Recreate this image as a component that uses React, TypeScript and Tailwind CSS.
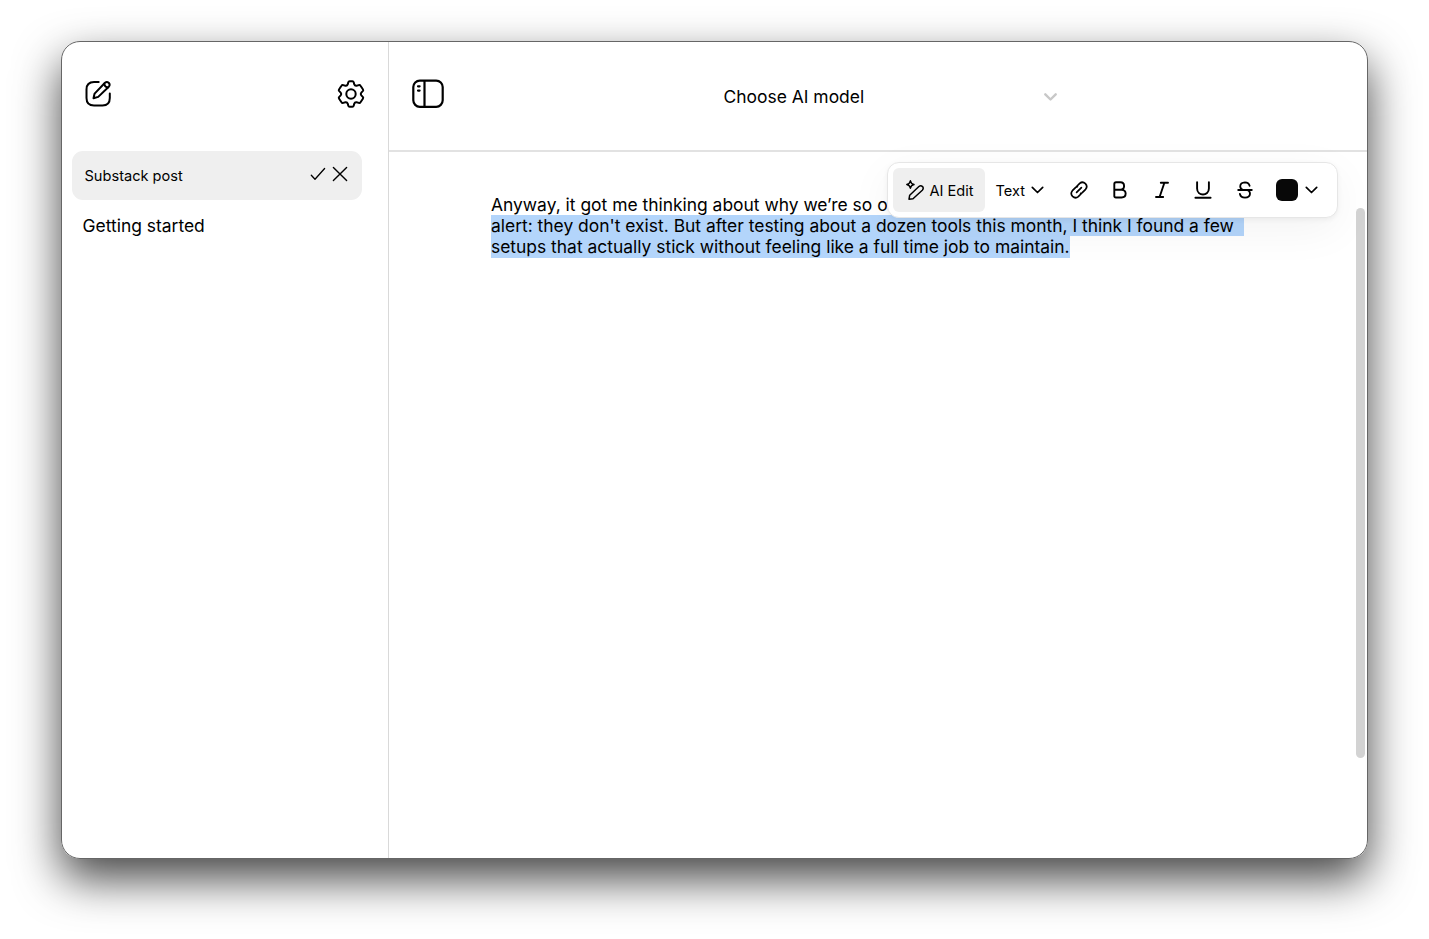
import React from "react";

const stroke = {
  fill: "none",
  stroke: "currentColor",
  strokeLinecap: "round" as const,
  strokeLinejoin: "round" as const,
};

function ComposeIcon() {
  return (
    <svg width="28" height="28" viewBox="0.5 0.5 28 28" {...stroke} strokeWidth="2">
      <path d="M14.2 2.4H9.5Q2 2.4 2 9.9V18.4Q2 25.9 9.5 25.9H18Q25.3 25.9 25.3 18.4V14" />
      <path d="M9 18.8L10.1 14.1L20.5 3.3Q22.3 1.7 24.2 3.3Q26 5.2 24.3 7.2L13.7 17.4Z" />
      <path d="M19.7 4.3Q20.2 7.4 23.4 8" />
    </svg>
  );
}

function GearIcon() {
  return (
    <svg width="28" height="28" viewBox="0 0 28 28" {...stroke} strokeWidth="2">
      <path d="M12.6 1.3H15.4Q16.4 1.3 16.7 2.3L17.3 4.4Q17.9 6 19.5 5.7L21.9 5.1Q23 4.9 23.5 5.8L25.9 9.3Q26.6 10.2 25.8 11.1L24.3 12.6Q23.2 14 24.3 15.4L25.8 16.9Q26.6 17.8 25.9 18.7L23.5 22.2Q23 23.1 21.9 22.9L19.5 22.3Q17.9 22 17.3 23.6L16.7 25.7Q16.4 26.7 15.4 26.7H12.6Q11.6 26.7 11.3 25.7L10.7 23.6Q10.1 22 8.5 22.3L6.1 22.9Q5 23.1 4.5 22.2L2.1 18.7Q1.4 17.8 2.2 16.9L3.7 15.4Q4.8 14 3.7 12.6L2.2 11.1Q1.4 10.2 2.1 9.3L4.5 5.8Q5 4.9 6.1 5.1L8.5 5.7Q10.1 6 10.7 4.4L11.3 2.3Q11.6 1.3 12.6 1.3Z" />
      <circle cx="14" cy="14" r="4.7" />
    </svg>
  );
}

function SidebarIcon() {
  return (
    <svg width="32" height="30" viewBox="0 0 32 30" {...stroke} strokeWidth="2.2">
      <rect x="1.3" y="1.6" width="29.4" height="26.2" rx="6.5" />
      <path d="M12.5 2V28M6 7.3H7.6M6 11.6H7.6" />
    </svg>
  );
}

function Chevron({ weight = 2 }: { weight?: number }) {
  return (
    <svg width="13" height="8" viewBox="0 0 13 8" {...stroke} strokeWidth={weight}>
      <path d="M1.3 1.3L6.5 6.5L11.7 1.3" />
    </svg>
  );
}

function MagicPenIcon() {
  return (
    <svg width="20" height="22" viewBox="0 0 20 22" {...stroke} strokeWidth="1.5">
      <path d="M5.4 1.8Q6 4.9 9 5.5Q6 6.1 5.4 9.2Q4.8 6.1 1.8 5.5Q4.8 4.9 5.4 1.8Z" />
      <path d="M4 20.2L4.7 16.2L13.9 7.5Q15.8 6 17.5 7.6Q19 9.4 17.3 11.2L8 19.7Z" />
    </svg>
  );
}

function LinkIcon() {
  return (
    <svg width="18" height="18" viewBox="0 0 18 18" {...stroke} strokeWidth="1.7">
      <path d="M7.1 5L9.7 2.4Q12.6 0 15.4 2.6Q18 5.4 15.6 8.3L12.3 11.6Q11.5 12.3 10.6 12.4" />
      <path d="M10.9 13L8.3 15.6Q5.4 18 2.6 15.4Q0 12.6 2.4 9.7L5.7 6.4Q6.5 5.7 7.4 5.6" />
      <path d="M6.6 11.4L11.4 6.6" />
    </svg>
  );
}

function BoldIcon() {
  return (
    <svg width="14" height="18" viewBox="0 0 14 18" {...stroke} strokeWidth="1.9">
      <path d="M1.3 8.7V3Q1.3 1.3 3 1.3H7.4C12.3 1.3 12.3 8.7 7.4 8.7H1.3V15Q1.3 16.5 3 16.5H8.6C14 16.5 14 8.7 8.6 8.7H7.4" />
    </svg>
  );
}

function ItalicIcon() {
  return (
    <svg width="14" height="18" viewBox="0 0 14 18" {...stroke} strokeWidth="1.9">
      <path d="M5.8 1.8H13M1 16H8.2M9.4 1.8L4.6 16" />
    </svg>
  );
}

function UnderlineIcon() {
  return (
    <svg width="18" height="18" viewBox="0 0 18 18" {...stroke} strokeWidth="1.9">
      <path d="M3.1 1.2V7.5C3.1 15.4 14.9 15.4 14.9 7.5V1.2M1.4 16.8H16.6" />
    </svg>
  );
}

function StrikeIcon() {
  return (
    <svg width="16" height="18" viewBox="0 0 16 18" {...stroke} strokeWidth="1.8">
      <path d="M1.2 9H14.8" />
      <path d="M12.6 4.8Q11.7 1.3 8 1.3Q3.4 1.5 3.2 5.2Q3.2 8 6.2 9M10.4 9Q13.2 10.2 13 12.9Q12.7 16.5 8 16.7Q3.7 16.6 2.9 13" />
    </svg>
  );
}

function CheckIcon() {
  return (
    <svg width="16" height="14" viewBox="0 0 16 14" {...stroke} strokeWidth="1.3">
      <path d="M1.3 8.2L5 12.3L14.6 1.5" />
    </svg>
  );
}

function CloseIcon() {
  return (
    <svg width="16" height="16" viewBox="0 0 16 16" {...stroke} strokeWidth="1.4">
      <path d="M1.4 1.4L14.6 14.6M14.6 1.4L1.4 14.6" />
    </svg>
  );
}

function Sidebar() {
  return (
    <aside className="flex w-[327px] shrink-0 flex-col border-r border-[#d9d9d9]">
      <div className="flex items-center justify-between pt-[38px] pr-[23px] pl-[23px]">
        <button aria-label="New note"><ComposeIcon /></button>
        <button aria-label="Settings"><GearIcon /></button>
      </div>
      <div className="mt-[43px] ml-[10px] flex h-[49px] w-[290px] items-center rounded-[11px] bg-[#efefef] pr-[14px] pl-[13px]">
        <span className="flex-1 pt-px text-[14.6px] leading-5">Substack post</span>
        <button className="mr-1.5 mb-1" aria-label="Confirm"><CheckIcon /></button>
        <button className="mb-1" aria-label="Cancel"><CloseIcon /></button>
      </div>
      <div className="mt-[14px] ml-[21px] text-[17.45px] leading-6">Getting started</div>
    </aside>
  );
}

function Toolbar() {
  return (
    <div className="absolute top-[10px] left-[498px] flex h-[56px] w-[451px] items-center rounded-[12px] border border-[#e6e6e6] bg-white pl-[5px] shadow-[0_12px_44px_rgba(0,0,0,0.05),0_2px_5px_rgba(0,0,0,0.05)]">
      <button className="flex h-[44px] w-[92px] items-center rounded-[6px] bg-[#efefef] pl-[12px] text-[14.6px]">
        <MagicPenIcon />
        <span className="ml-[5px] pt-0.5 leading-5 whitespace-nowrap">AI Edit</span>
      </button>
      <button className="ml-[11px] flex w-[48px] items-center justify-between text-[14.6px]">
        <span className="pt-0.5 leading-5">Text</span>
        <Chevron weight={1.7} />
      </button>
      <button className="ml-[26px]" aria-label="Link"><LinkIcon /></button>
      <button className="ml-[25px]" aria-label="Bold"><BoldIcon /></button>
      <button className="ml-[28px]" aria-label="Italic"><ItalicIcon /></button>
      <button className="ml-[25px]" aria-label="Underline"><UnderlineIcon /></button>
      <button className="ml-[25px]" aria-label="Strikethrough"><StrikeIcon /></button>
      <button className="ml-[23px] flex items-center gap-[7px]" aria-label="Text colour">
        <span className="size-[22px] rounded-[6px] bg-[#080808]" />
        <Chevron weight={1.7} />
      </button>
    </div>
  );
}

export default function App() {
  return (
    <div className="h-[939px] w-[1429px] overflow-hidden bg-white pt-[41px] pl-[60.5px] font-['Inter',sans-serif] text-black">
      <div className="h-[817.5px] w-[1307.5px] rounded-[19px] shadow-[0_20px_46px_rgba(0,0,0,0.73)]">
        <div className="flex h-full overflow-hidden rounded-[19px] border border-[#666] bg-white">
          <Sidebar />
          <main className="flex min-w-0 flex-1 flex-col">
            <header className="flex h-[110px] shrink-0 border-b-2 border-[#e2e2e2] pl-[23px]">
              <button className="mt-[37px] h-[30px]" aria-label="Toggle sidebar"><SidebarIcon /></button>
              <div className="mt-[42px] ml-[280px] flex h-6 w-[333px] items-center justify-between text-[17.45px]">
                <span className="pt-0.5 leading-6">Choose AI model</span>
                <span className="mt-0.5 text-[#c8c8c8]"><Chevron weight={2.4} /></span>
              </div>
            </header>
            <div className="relative flex flex-1">
              <div className="ml-[102.5px] flex flex-col items-start pt-[42px] text-[17.43px] whitespace-nowrap">
                <p className="h-[21px] leading-[22px]">Anyway, it got me thinking about why we’re so o</p>
                <p className="h-[21px] w-[753px] bg-[#b3d5fb] leading-[21px]">alert: they don't exist. But after testing about a dozen tools this month, I think I found a few</p>
                <p className="h-[22px] bg-[#b3d5fb] leading-[22px]">setups that actually stick without feeling like a full time job to maintain.</p>
              </div>
              <div className="mt-[56px] mr-[2px] ml-auto h-[550px] w-[9px] rounded-full bg-[#d3d3d3]" />
              <Toolbar />
            </div>
          </main>
        </div>
      </div>
    </div>
  );
}
